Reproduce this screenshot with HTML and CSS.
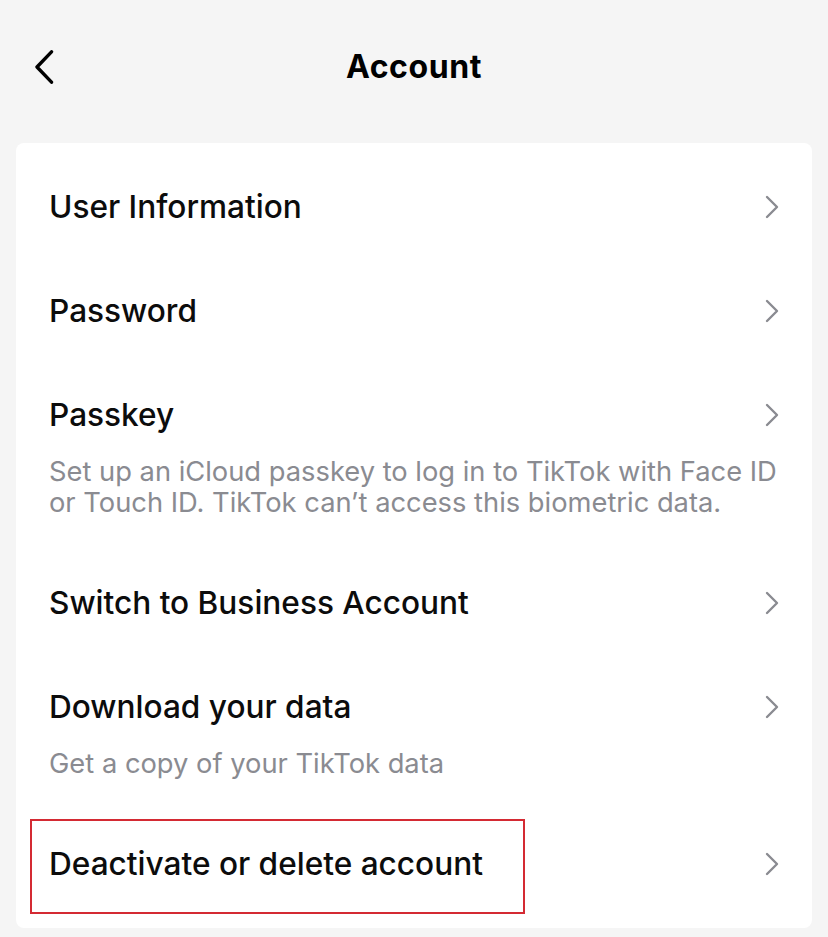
FILE: index.html
```html
<!DOCTYPE html>
<html lang="en">
<head>
<meta charset="utf-8">
<title>Account</title>
<link rel="stylesheet" href="styles.css">
</head>
<body>
<header class="topbar">
  <button class="back" aria-label="Back">
    <svg width="20" height="34" viewBox="0 0 20 34"><polyline points="17.5,1.8 3,17 17.5,32.2" fill="none" stroke="#000" stroke-width="3.4" stroke-linecap="round" stroke-linejoin="round"/></svg>
  </button>
  <h1 class="title">Account</h1>
  <span class="spacer"></span>
</header>

<main class="card">
  <div class="row">
    <span class="label">User Information</span>
    <svg class="chev" width="14" height="24" viewBox="0 0 14 24"><polyline points="2,2 12,12 2,22" fill="none" stroke="#8a8b91" stroke-width="2.4" stroke-linecap="round" stroke-linejoin="round"/></svg>
  </div>
  <div class="row">
    <span class="label">Password</span>
    <svg class="chev" width="14" height="24" viewBox="0 0 14 24"><polyline points="2,2 12,12 2,22" fill="none" stroke="#8a8b91" stroke-width="2.4" stroke-linecap="round" stroke-linejoin="round"/></svg>
  </div>
  <div class="row has-sub">
    <span class="label">Passkey</span>
    <svg class="chev" width="14" height="24" viewBox="0 0 14 24"><polyline points="2,2 12,12 2,22" fill="none" stroke="#8a8b91" stroke-width="2.4" stroke-linecap="round" stroke-linejoin="round"/></svg>
    <p class="sub">Set up an iCloud passkey to log in to TikTok with Face ID or Touch ID. TikTok can’t access this biometric data.</p>
  </div>
  <div class="row">
    <span class="label">Switch to Business Account</span>
    <svg class="chev" width="14" height="24" viewBox="0 0 14 24"><polyline points="2,2 12,12 2,22" fill="none" stroke="#8a8b91" stroke-width="2.4" stroke-linecap="round" stroke-linejoin="round"/></svg>
  </div>
  <div class="row has-sub">
    <span class="label">Download your data</span>
    <svg class="chev" width="14" height="24" viewBox="0 0 14 24"><polyline points="2,2 12,12 2,22" fill="none" stroke="#8a8b91" stroke-width="2.4" stroke-linecap="round" stroke-linejoin="round"/></svg>
    <p class="sub">Get a copy of your TikTok data</p>
  </div>
  <div class="row highlighted">
    <span class="label">Deactivate or delete account</span>
    <svg class="chev" width="14" height="24" viewBox="0 0 14 24"><polyline points="2,2 12,12 2,22" fill="none" stroke="#8a8b91" stroke-width="2.4" stroke-linecap="round" stroke-linejoin="round"/></svg>
    <span class="mark" aria-hidden="true"></span>
  </div>
</main>
</body>
</html>
```

FILE: styles.css
```css
* { box-sizing: border-box; }

html, body {
  margin: 0;
  padding: 0;
}

body {
  background: #f5f5f5;
  font-family: "Inter", "Liberation Sans", sans-serif;
  color: #000;
  width: 828px;
  height: 937px;
  overflow: hidden;
}

.topbar {
  height: 134px;
  display: grid;
  grid-template-columns: 1fr auto 1fr;
  align-items: center;
  padding: 0 34px;
}

.back {
  justify-self: start;
  background: none;
  border: 0;
  padding: 0;
  margin: 0;
  width: 20px;
  height: 34px;
  display: block;
}
.back svg { display: block; }

.title {
  margin: 0;
  font-size: 32px;
  font-weight: 700;
  line-height: 40px;
  letter-spacing: 0.6px;
}

.card {
  margin: 9px 16px 0;
  background: #fff;
  border-radius: 8px;
  padding: 12px 0;
}

.row {
  position: relative;
  display: grid;
  grid-template-columns: 1fr auto;
  align-items: center;
  padding: 32px 33px;
}

.label {
  font-size: 31.6px;
  line-height: 40px;
  font-weight: 500;
  color: #0c0c0c;
}

.chev { display: block; }

.has-sub { padding-bottom: 33px; }

.sub {
  grid-column: 1 / -1;
  margin: 21px 0 0;
  font-size: 27.3px;
  line-height: 31px;
  color: #8a8b91;
  font-weight: 400;
}

.mark {
  position: absolute;
  left: 14px;
  top: 7px;
  width: 495px;
  height: 95px;
  border: 2px solid #d42a33;
  pointer-events: none;
}
```
